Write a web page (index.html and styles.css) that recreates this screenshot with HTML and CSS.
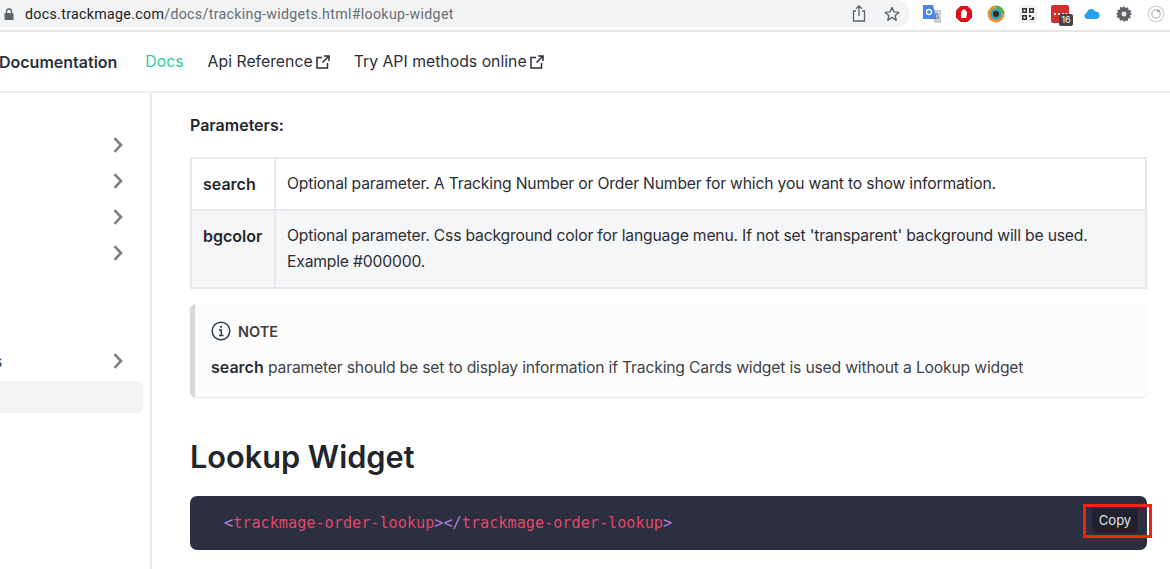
FILE: index.html
```html
<!DOCTYPE html>
<html lang="en">
<head>
  <meta charset="UTF-8">
  <title>Tracking Widgets</title>
  <link rel="stylesheet" href="styles.css">
</head>
<body>
  <div class="browser">
    <div class="address">
      <svg class="lock" width="10" height="12" viewBox="0 0 10 12"><path d="M2.5 5V3.5a2.5 2.5 0 0 1 5 0V5" fill="none" stroke="#5f6368" stroke-width="1.3"/><rect x="0.5" y="5" width="9" height="7" rx="1" fill="#5f6368"/></svg>
      <span class="url"><b>docs.trackmage.com</b>/docs/tracking-widgets.html#lookup-widget</span>
      <svg class="addr-icon share" width="14" height="17" viewBox="0 0 14 17"><path d="M4 6H1.5v10h11V6H10M7 11V1M4 3.8 7 1l3 2.8" fill="none" stroke="#5f6368" stroke-width="1.3"/></svg>
      <svg class="addr-icon" width="16" height="16" viewBox="0 0 16 16"><path d="M8 1.5l2 4.4 4.8.5-3.6 3.2 1 4.7L8 11.4l-4.2 2.9 1-4.7L1.2 6.400l4.800-.5z" fill="none" stroke="#5f6368" stroke-width="1.4" stroke-linejoin="round"/></svg>
    </div>
    <div class="extensions">
      <svg width="18" height="18" viewBox="0 0 18 18"><path d="M9 5h9v13H11z" fill="#c9ccd1"/><path d="M13.500 8l-2 5h4z" fill="none" stroke="#7b8087" stroke-width="1"/><path d="M0 0h10l3.500 14H0z" fill="#4a85e8"/><circle cx="6" cy="7" r="2.500" fill="none" stroke="#fff" stroke-width="1.300"/></svg>
      <svg width="18" height="18" viewBox="0 0 18 18"><path d="M5.500 1h7L17 5.500v7L12.500 17h-7L1 12.500v-7z" fill="#e0101b"/><path d="M6 13V6.500h1.200V5h1v-.5h1.500V5h1v1.500H12V9l-1 4z" fill="#fff"/></svg>
      <svg width="18" height="18" viewBox="0 0 18 18"><circle cx="9" cy="9" r="8.500" fill="#e8913a"/><path d="M9 .5A8.500 8.500 0 0 1 17.500 9H9z" fill="#5fb04d"/><circle cx="9" cy="9" r="5.500" fill="#2aa6b8"/><circle cx="9" cy="9" r="3" fill="#3b2430"/></svg>
      <svg width="18" height="18" viewBox="0 0 18 18"><rect width="18" height="18" rx="2" fill="#f1f1f1"/><path d="M3 3h5v5H3zM10 3h5v5h-5zM3 10h5v5H3zM10 10h2v2h-2zM13 12h2v3h-4v-1h2z" fill="#333"/><path d="M4.500 4.500h2v2h-2zM11.500 4.500h2v2h-2zM4.500 11.500h2v2h-2z" fill="#f1f1f1"/></svg>
      <div class="ext-badge">
        <svg width="18" height="18" viewBox="0 0 18 18"><rect width="18" height="18" rx="2" fill="#d32f2f"/><path d="M3 8h2v2H3zM7 8h2v2H7zM11 8h2v2h-2zM14.500 8h1.500v2h-1.500z" fill="#fff"/></svg>
        <span class="badge-count">16</span>
      </div>
      <svg width="18" height="18" viewBox="0 0 18 18"><path d="M4.500 14a3.200 3.200 0 0 1-.6-6.300A4.500 4.500 0 0 1 12.400 6.500 3.800 3.800 0 0 1 13.500 14z" fill="#27a0ee"/></svg>
      <svg width="18" height="18" viewBox="0 0 18 18"><path d="M9 .8l1.500 2.300 2.600-.9.500 2.700 2.700.5-.9 2.600L17.200 9l-2.300 1.500.9 2.600-2.700.5-.5 2.700-2.600-.9L9 17.200l-1.500-2.300-2.600.9-.5-2.700-2.700-.5.9-2.600L.8 9l2.300-1.500-.9-2.600 2.700-.5.5-2.700 2.600.9z" fill="#5f6368"/><circle cx="9" cy="9" r="2.500" fill="#e8e8e8"/></svg>
      <svg width="18" height="18" viewBox="0 0 18 18"><circle cx="9" cy="9" r="7.800" fill="none" stroke="#d8d8d8" stroke-width="1.600"/><circle cx="9" cy="9" r="4.200" fill="none" stroke="#c8c8c8" stroke-width="1.600"/><circle cx="11.500" cy="6" r="1.300" fill="#999"/></svg>
    </div>
  </div>

  <header class="navbar">
    <span class="brand">Documentation</span>
    <a class="nav-link active">Docs</a>
    <a class="nav-link">Api Reference
      <svg class="ext-link" width="14" height="14" viewBox="0 0 14 14"><path d="M6 2.500H1v10.500h10.500V8M8 1h5v5M13 1 6.500 7.500" fill="none" stroke="#2c2e35" stroke-width="1.500"/></svg>
    </a>
    <a class="nav-link">Try API methods online
      <svg class="ext-link" width="14" height="14" viewBox="0 0 14 14"><path d="M6 2.500H1v10.500h10.500V8M8 1h5v5M13 1 6.500 7.500" fill="none" stroke="#2c2e35" stroke-width="1.500"/></svg>
    </a>
  </header>

  <div class="page">
    <aside class="sidebar">
      <div class="side-item"><svg class="chev" width="10" height="16" viewBox="0 0 10 16"><path d="M1.500 1.200 8 8l-6.500 6.800" fill="none" stroke="#7f7f7f" stroke-width="2.600"/></svg></div>
      <div class="side-item"><svg class="chev" width="10" height="16" viewBox="0 0 10 16"><path d="M1.500 1.200 8 8l-6.500 6.800" fill="none" stroke="#7f7f7f" stroke-width="2.600"/></svg></div>
      <div class="side-item"><svg class="chev" width="10" height="16" viewBox="0 0 10 16"><path d="M1.500 1.200 8 8l-6.500 6.800" fill="none" stroke="#7f7f7f" stroke-width="2.600"/></svg></div>
      <div class="side-item"><svg class="chev" width="10" height="16" viewBox="0 0 10 16"><path d="M1.500 1.200 8 8l-6.500 6.800" fill="none" stroke="#7f7f7f" stroke-width="2.600"/></svg></div>
      <div class="side-item"></div>
      <div class="side-item"></div>
      <div class="side-item"><span class="side-label">s</span><svg class="chev" width="10" height="16" viewBox="0 0 10 16"><path d="M1.500 1.200 8 8l-6.500 6.800" fill="none" stroke="#7f7f7f" stroke-width="2.600"/></svg></div>
      <div class="side-item selected"></div>
    </aside>

    <main class="content">
      <p class="params-title">Parameters:</p>
      <table class="params">
        <tr>
          <th>search</th>
          <td>Optional parameter. A Tracking Number or Order Number for which you want to show information.</td>
        </tr>
        <tr class="even">
          <th>bgcolor</th>
          <td>Optional parameter. Css background color for language menu. If not set 'transparent' background will be used. Example #000000.</td>
        </tr>
      </table>

      <div class="note">
        <div class="note-head">
          <svg width="20" height="20" viewBox="0 0 20 20"><circle cx="10" cy="10" r="8.800" fill="none" stroke="#2c3e50" stroke-width="1.500"/><path d="M8 9h2.300v5.500M8 14.500h4.500" fill="none" stroke="#2c3e50" stroke-width="1.500"/><circle cx="10" cy="5.800" r="1.100" fill="#2c3e50"/></svg>
          <span>NOTE</span>
        </div>
        <p><b>search</b> parameter should be set to display information if Tracking Cards widget is used without a Lookup widget</p>
      </div>

      <h2 class="section-title">Lookup Widget</h2>

      <div class="code">
        <code><span class="punct">&lt;</span>trackmage-order-lookup<span class="punct">&gt;&lt;/</span>trackmage-order-lookup<span class="punct">&gt;</span></code>
        <button class="copy">Copy</button>
        <span class="highlight"></span>
      </div>
    </main>
  </div>
</body>
</html>
```

FILE: styles.css
```css
*{margin: 0;padding: 0;box-sizing: border-box;}

html,body{height: 100%;overflow: hidden;}
body{width: 1170px;height: 569px;background: #fff;color: #2c3e50;font-family: Inter, "Liberation Sans", sans-serif;font-size: 15.7px;letter-spacing: -.18px;}

/* browser toolbar */
.browser{height: 32px;display: flex;align-items: flex-start;border-bottom: 2px solid #e6e6e6;letter-spacing: 0;}
.address{width: 910px;height: 27px;background: #f1f3f4;border-radius: 0 14px 14px 0;display: flex;align-items: center;padding-left: 4px;}
.lock{margin-right: 11px;}
.url{font-size: 14.2px;color: #6a6d71;flex: 1;font-family: Roboto, "Liberation Sans", sans-serif;letter-spacing: .32px;}
.url b{font-weight: 400;color: #202124;}
.addr-icon{margin-right: 10px;}
.share{margin-right: 18px;margin-left: 2px;}
.extensions{flex: 1;display: flex;align-items: center;gap: 14px;height: 27px;padding-left: 13px;}
.ext-badge{position: relative;width: 18px;height: 18px;}
.badge-count{position: absolute;left: 8px;top: 9px;width: 14px;height: 12px;line-height: 12px;background: #444;color: #fff;font-size: 9px;text-align: center;border-radius: 2px;}

/* navbar */
.navbar{height: 61px;display: flex;align-items: center;border-bottom: 2px solid #eee;margin-left: -1px;letter-spacing: 0;font-size: 15.8px;}
.brand{font-weight: 600;color: #2c3140;font-size: 16px;margin-right: 28px;}
.nav-link{margin-right: 24px;color: #2c2e35;display: flex;align-items: center;gap: 3px;}
.nav-link.active{color: #2ecc9a;}

/* layout */
.page{display: flex;height: 476px;}
.sidebar{width: 152px;flex: none;border-right: 2px solid #eaeaea;padding-top: 34px;padding-right: 7px;}
.side-item{height: 36px;display: flex;align-items: center;justify-content: flex-end;padding-right: 20px;position: relative;}
.side-label{position: absolute;left: -6px;color: #2c3e50;}
.selected{height: 32px;margin-top: 2px;background: #f3f4f5;border-radius: 0 6px 6px 0;}
.content{width: 957px;margin-left: 38px;}

.params-title{font-weight: 600;font-size: 16px;letter-spacing: 0;margin-top: 22px;line-height: 20px;color: #24262c;}
.params{width: 100%;margin-top: 22px;border-collapse: collapse;color: #2c2e35;}
.params th,.params td{border: 2px solid #e6e7ea;padding: 12px 11px;line-height: 26px;text-align: left;vertical-align: top;}
.params th{width: 84px;font-weight: 600;font-size: 16px;letter-spacing: 0;color: #24292f;}
.even{background: #f5f6f8;}

.note{margin-top: 15px;height: 93px;background: #fcfcfc;border-left: 5px solid #d5d7da;border-radius: 6px;box-shadow: 0 1px 2px rgba(0,0,0,.1);padding: 16px;}
.note-head{display: flex;align-items: center;gap: 7px;height: 22px;font-size: 14.5px;font-weight: 600;letter-spacing: 0;color: #404040;}
.note p{margin-top: 12px;line-height: 26px;color: #3f4349;}
.note b{font-weight: 600;font-size: 16px;letter-spacing: 0;color: #2c2e35;}

.section-title{font-size: 30.7px;font-weight: 600;letter-spacing: 0;color: #22262c;line-height: 40px;margin-top: 40px;}

.code{position: relative;margin-top: 19px;height: 54px;background: #2b2f3f;border-radius: 7px;display: flex;align-items: center;padding-left: 34px;letter-spacing: 0;}
.code code{font-family: "DejaVu Sans Mono", monospace;font-size: 15.2px;color: #e2476c;}
.punct{color: #b57edc;}
.copy{position: absolute;right: 9px;top: 10px;width: 46px;height: 27px;border: none;border-radius: 5px;background: #20232f;color: #e3e3e3;font-family: Inter, sans-serif;font-size: 13px;}
.highlight{position: absolute;left: 893px;top: 8px;width: 69px;height: 34px;border: 3px solid #f0250e;}
```
